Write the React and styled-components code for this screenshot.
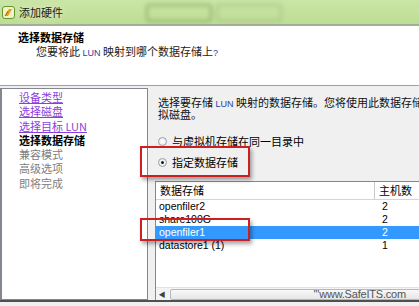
import React from 'react';
import styled, { createGlobalStyle } from 'styled-components';

const GlobalStyle = createGlobalStyle`
  html, body { margin: 0; padding: 0; }
  body {
    font-family: "Noto Sans CJK SC", "Liberation Sans", sans-serif;
    font-size: 11px;
    color: #000;
    overflow: hidden;
  }
`;

const Window = styled.div`
  width: 419px;
  height: 306px;
  overflow: hidden;
  display: flex;
  flex-direction: column;
  background: #f0f0f0;
  position: relative;
`;

const TitleBar = styled.div`
  height: 24px;
  flex: none;
  display: flex;
  align-items: center;
  gap: 4px;
  padding-left: 2px;
  background: linear-gradient(#cbe5a6, #bedd94);
  border-bottom: 2px solid #a4ad98;
  position: relative;
  overflow: hidden;
`;

const TitleText = styled.span`
  font-size: 11px;
  color: #1a1a1a;
  text-shadow: 0 0 6px #e9f5d8;
`;

const Blur = styled.div`
  position: absolute;
  top: 4px;
  left: ${p => p.$left}px;
  width: ${p => p.$width}px;
  height: 14px;
  border: 2px solid ${p => p.$edge};
  border-radius: 4px;
  filter: blur(2px);
`;

const Header = styled.div`
  height: 60px;
  flex: none;
  background: #fff;
  border-bottom: 1px solid #a0a0a0;
  padding: 4px 0 0 18px;
  box-sizing: border-box;
`;

const HeaderTitle = styled.div`
  font-weight: bold;
  font-size: 11px;
  line-height: 14px;
`;

const HeaderSub = styled.div`
  font-size: 11px;
  line-height: 14px;
  padding-left: 18px;
  color: #222;
`;

const Lun = styled.span`
  color: #1e3fa8;
  font-family: "Liberation Sans", sans-serif;
  font-size: 9px;
  line-height: 1;
`;

const Body = styled.div`
  flex: none;
  height: 216px;
  display: flex;
  padding-top: 2px;
  border-bottom: 2px solid #505050;
  position: relative;
  box-sizing: border-box;
`;

const Nav = styled.div`
  width: 148px;
  flex: none;
  background: #fff;
  border: 1px solid #828790;
  border-left-width: 2px;
  box-sizing: border-box;
  padding: 1px 0 0 17px;
  display: flex;
  flex-direction: column;
`;

const NavItem = styled.div`
  line-height: 14.3px;
  font-size: 11px;
  color: ${p => (p.$state === 'link' ? '#8a3fdc' : p.$state === 'done' ? '#808080' : '#000')};
  text-decoration: ${p => (p.$state === 'link' ? 'underline' : 'none')};
  font-weight: ${p => (p.$state === 'active' ? 'bold' : 'normal')};
`;

const Pane = styled.div`
  flex: 1;
  padding: 9px 0 0 10px;
  display: flex;
  flex-direction: column;
  overflow: hidden;
`;

const Desc = styled.div`
  line-height: 11px;
  white-space: nowrap;
  color: #111;
`;

const Options = styled.div`
  margin-top: 14px;
  display: flex;
  flex-direction: column;
  gap: 7px;
`;

const OptionRow = styled.label`
  display: flex;
  align-items: center;
  gap: 5px;
  height: 14px;
  white-space: nowrap;
`;

const Radio = styled.span`
  width: 9px;
  height: 9px;
  border-radius: 50%;
  border: 1px solid #9aa0a8;
  background: radial-gradient(#fff, #e3e3e3);
  display: inline-flex;
  align-items: center;
  justify-content: center;
  box-sizing: border-box;
  &::after {
    content: '';
    width: 3px;
    height: 3px;
    border-radius: 50%;
    background: ${p => (p.$checked ? '#1a1a1a' : 'transparent')};
  }
`;

const Table = styled.div`
  margin-top: 12px;
  margin-left: -3px;
  width: 280px;
  height: 119px;
  flex: none;
  border: 1px solid #828790;
  background: #fff;
  display: flex;
  flex-direction: column;
  position: relative;
`;

const HeadRow = styled.div`
  display: grid;
  grid-template-columns: 219px 1fr;
  height: 17px;
  border-bottom: 1px solid #d5d5d5;
`;

const HeadCell = styled.div`
  padding-left: 4px;
  line-height: 17px;
  border-right: ${p => (p.$last ? 'none' : '1px solid #c8c8c8')};
  font-size: 11px;
`;

const Rows = styled.div`
  flex: 1;
`;

const Row = styled.div`
  display: grid;
  grid-template-columns: 219px 1fr;
  height: 13px;
  line-height: 13px;
  background: ${p => (p.$selected ? '#3399ff' : 'transparent')};
  color: ${p => (p.$selected ? '#fff' : '#000')};
  font-family: "Liberation Sans", sans-serif;
  font-size: 10.5px;
`;

const Cell = styled.div`
  padding-left: ${p => (p.$num ? 7 : 3)}px;
`;

const HScroll = styled.div`
  height: 12px;
  margin: 0 0 1px 0;
  display: flex;
  align-items: center;
  background: #f3f3f3;
  border-top: 1px solid #e2e2e2;
`;

const Arrow = styled.span`
  width: 12px;
  font-size: 7px;
  color: #404040;
  text-align: center;
`;

const Track = styled.div`
  flex: 1;
  height: 9px;
  margin-left: 2px;
  border: 1px solid #b8b8b8;
  border-radius: 2px;
  background: linear-gradient(#f8f8f8, #e6e6e6);
`;

const Watermark = styled.span`
  position: absolute;
  right: 30px;
  bottom: 1px;
  font-family: "Liberation Sans", sans-serif;
  font-size: 11px;
  color: #555;
  letter-spacing: -0.2px;
`;

const Highlight = styled.div`
  position: absolute;
  left: 140px;
  top: ${p => p.$top}px;
  width: 110px;
  height: ${p => p.$height}px;
  border: 2px solid #cc1f1f;
  box-sizing: border-box;
  box-shadow: 2px 3px 4px rgba(0, 0, 0, 0.35);
`;

const AppIcon = () => (
  <svg width="13" height="13" viewBox="0 0 13 13">
    <rect x="0.5" y="0.5" width="12" height="12" rx="2.5" fill="#f6f0c8" stroke="#5d9a2a" />
    <path d="M3 10 L7 3 L10 3 L6 10 Z" fill="#e89a1c" />
    <path d="M3 10 L6 5" stroke="#b35f00" strokeWidth="1" />
  </svg>
);

const navItems = [
  ['设备类型', 'link'],
  ['选择磁盘', 'link'],
  ['选择目标 LUN', 'link'],
  ['选择数据存储', 'active'],
  ['兼容模式', 'done'],
  ['高级选项', 'done'],
  ['即将完成', 'done'],
];

const stores = [
  ['openfiler2', '2'],
  ['share100G', '2'],
  ['openfiler1', '2', true],
  ['datastore1 (1)', '1'],
];

export default function App() {
  return (
    <>
      <GlobalStyle />
      <Window>
        <TitleBar>
          <AppIcon />
          <TitleText>添加硬件</TitleText>
          <Blur $left={146} $width={62} $edge="#8fb06a" />
          <Blur $left={216} $width={62} $edge="#a9c88a" />
        </TitleBar>
        <Header>
          <HeaderTitle>选择数据存储</HeaderTitle>
          <HeaderSub>
            您要将此 <Lun>LUN</Lun> 映射到哪个数据存储上<Lun>?</Lun>
          </HeaderSub>
        </Header>
        <Body>
          <Nav>
            {navItems.map(([label, state]) => (
              <NavItem key={label} $state={state}>{label}</NavItem>
            ))}
          </Nav>
          <Pane>
            <Desc>
              选择要存储 <Lun>LUN</Lun> 映射的数据存储。您将使用此数据存储上的虚
              <br />
              拟磁盘。
            </Desc>
            <Options>
              <OptionRow>
                <Radio />
                与虚拟机存储在同一目录中
              </OptionRow>
              <OptionRow>
                <Radio $checked />
                指定数据存储
              </OptionRow>
            </Options>
            <Table>
              <HeadRow>
                <HeadCell>数据存储</HeadCell>
                <HeadCell $last>主机数</HeadCell>
              </HeadRow>
              <Rows>
                {stores.map(([name, hosts, sel]) => (
                  <Row key={name} $selected={sel}>
                    <Cell>{name}</Cell>
                    <Cell $num>{hosts}</Cell>
                  </Row>
                ))}
              </Rows>
              <HScroll>
                <Arrow>◀</Arrow>
                <Track />
              </HScroll>
              <Watermark>'''www.SafeITS.com</Watermark>
            </Table>
          </Pane>
          <Highlight $top={60} $height={31} />
          <Highlight $top={132} $height={23} />
        </Body>
      </Window>
    </>
  );
}
